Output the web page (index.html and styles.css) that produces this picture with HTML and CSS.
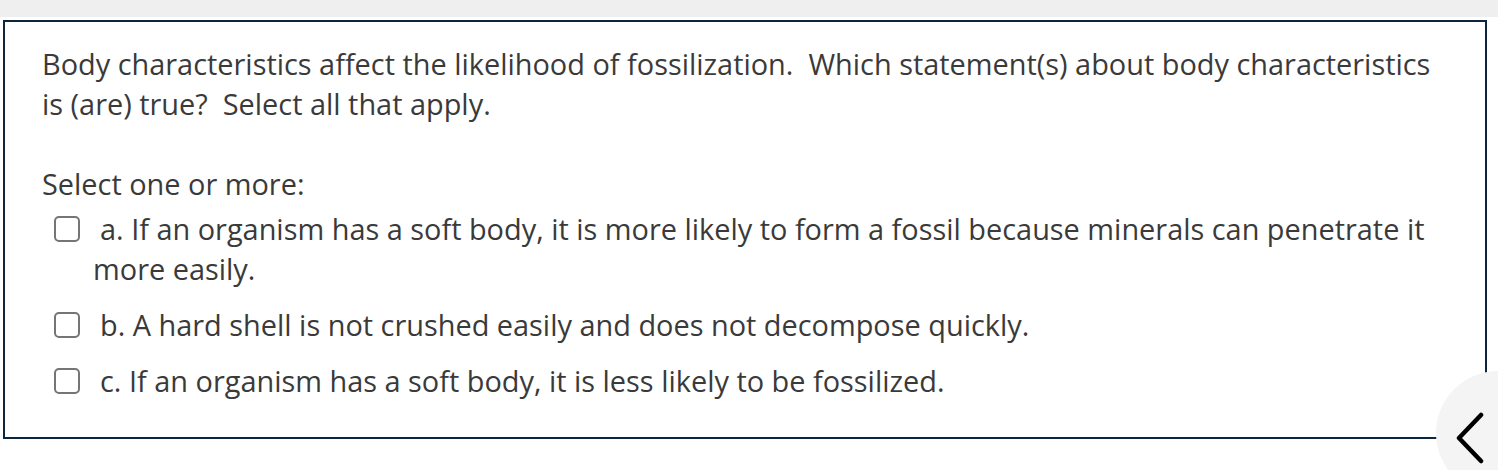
FILE: index.html
```html
<!DOCTYPE html>
<html>
<head>
<meta charset="utf-8">
<link rel="stylesheet" href="styles.css">
</head>
<body>
<div class="topbar"></div>
<div class="question">
  <div class="qtext">Body characteristics affect the likelihood of fossilization.&nbsp; Which statement(s) about body characteristics is (are) true?&nbsp; Select all that apply.</div>
  <div class="prompt">Select one or more:</div>
  <div class="answers">
    <div class="option"><span class="box"></span><div class="label">a. If an organism has a soft body, it is more likely to form a fossil because minerals can penetrate it more easily.</div></div>
    <div class="option"><span class="box"></span><div class="label">b. A hard shell is not crushed easily and does not decompose quickly.</div></div>
    <div class="option"><span class="box"></span><div class="label">c. If an organism has a soft body, it is less likely to be fossilized.</div></div>
  </div>
</div>
<button class="navbtn" aria-label="previous">
  <svg width="34" height="54" viewBox="0 0 34 54"><path d="M27 3 L5 26 L27 49" fill="none" stroke="#000" stroke-width="4.5" stroke-linecap="round" stroke-linejoin="round"/></svg>
</button>
</body>
</html>
```
FILE: styles.css
```css
html, body { margin: 0; padding: 0; background: #fff; }
body {
  font-family: "Open Sans", "Noto Sans", sans-serif;
  color: #3a3a3a;
  width: 1498px;
  height: 470px;
  overflow: hidden;
  position: relative;
}
.topbar { height: 17px; background: #efefef; }
.question {
  margin: 3px 11px 0 3px;
  border: 2px solid #0d2640;
  height: 419px;
  box-sizing: border-box;
  padding: 22px 44px 0 37px;
  font-size: 28.9px;
  line-height: 40px;
}
.prompt { margin-top: 40px; }
.answers { margin-top: 5px; }
.option { display: flex; align-items: flex-start; margin-bottom: 16px; }
.box {
  flex: none;
  width: 22px; height: 22px;
  border: 2px solid #757575;
  border-radius: 5px;
  margin: 7px 0 0 12px;
}
.label { margin-left: 13px; text-indent: 7px; }
.navbtn {
  position: absolute;
  left: 1436px; top: 371px;
  width: 124px; height: 124px;
  border-radius: 50%;
  border: none;
  background: #f4f4f4;
  padding: 0;
  display: flex;
  align-items: flex-start;
  justify-content: flex-start;
}
.navbtn svg { margin: 41px 0 0 18px; }
```
